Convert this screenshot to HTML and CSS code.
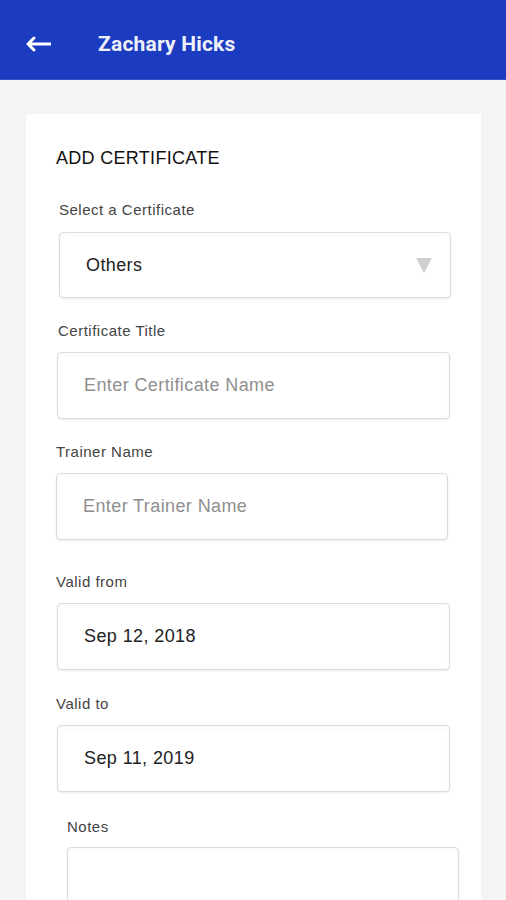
FILE: index.html
```html
<!DOCTYPE html>
<html>
<head>
<meta charset="utf-8">
<link rel="stylesheet" href="styles.css">
</head>
<body>
<header class="appbar">
  <svg class="back" width="26" height="16" viewBox="0 0 26 16"><path d="M25 8H3M9 2L3 8l6 6" fill="none" stroke="#fff" stroke-width="3" stroke-linecap="round" stroke-linejoin="round"/></svg>
  <h1 class="title">Zachary Hicks</h1>
</header>
<main class="page">
  <section class="card">
    <h2 class="card-title">ADD CERTIFICATE</h2>
    <div class="field f-select">
      <label class="label">Select a Certificate</label>
      <div class="box">
        <span class="value">Others</span>
        <span class="caret"></span>
      </div>
    </div>
    <div class="field f-title">
      <label class="label">Certificate Title</label>
      <div class="box"><span class="placeholder">Enter Certificate Name</span></div>
    </div>
    <div class="field f-trainer">
      <label class="label">Trainer Name</label>
      <div class="box"><span class="placeholder">Enter Trainer Name</span></div>
    </div>
    <div class="field f-from">
      <label class="label">Valid from</label>
      <div class="box"><span class="value">Sep 12, 2018</span></div>
    </div>
    <div class="field f-to">
      <label class="label">Valid to</label>
      <div class="box"><span class="value">Sep 11, 2019</span></div>
    </div>
    <div class="field f-notes">
      <label class="label">Notes</label>
      <div class="box notes-box"></div>
    </div>
  </section>
</main>
</body>
</html>
```
FILE: styles.css
```css
* { box-sizing: border-box; }
html, body { margin: 0; padding: 0; }
body {
  width: 506px;
  height: 900px;
  overflow: hidden;
  background: #f4f4f4;
  font-family: "Liberation Sans", Arial, sans-serif;
}
.appbar {
  height: 80px;
  background: #1b3bc0;
  border-bottom: 1px solid #3a50c8;
  display: flex;
  align-items: center;
  padding-left: 25px;
  padding-top: 8px;
}
.back { display: block; }
.title {
  margin: 0 0 0 47px;
  font-family: Roboto, "Liberation Sans", sans-serif;
  font-weight: 700;
  font-size: 21px;
  color: #eef0fb;
  letter-spacing: 0.2px;
}
.page {
  padding: 34px 25px 0 26px;
  height: 820px;
  overflow: hidden;
}
.card {
  background: #fff;
  padding: 34px 0 0 0;
  height: 786px;
  overflow: hidden;
}
.card-title {
  margin: 0 0 32px 30px;
  font-size: 18px;
  line-height: 20px;
  font-weight: 400;
  color: #111;
  letter-spacing: 0.3px;
}
.field {
  display: flex;
  flex-direction: column;
  margin-bottom: 23px;
}
.label {
  font-size: 15px;
  line-height: 20px;
  color: #444;
  letter-spacing: 0.5px;
  margin-bottom: 12px;
}
.box {
  height: 66px;
  flex-shrink: 0;
  border: 1px solid #dcdcdc;
  border-radius: 4px;
  box-shadow: 0 1px 2px rgba(0,0,0,0.08), inset 0 2px 4px rgba(0,0,0,0.03);
  display: flex;
  align-items: center;
  padding-left: 26px;
  padding-right: 18px;
  background: #fff;
}
.value { font-size: 18px; color: #222; letter-spacing: 0.4px; }
.placeholder { font-size: 18px; color: #8f8f8f; letter-spacing: 0.4px; }
.caret {
  margin-left: auto;
  width: 0; height: 0;
  border-left: 8px solid transparent;
  border-right: 8px solid transparent;
  border-top: 15px solid #cfcfcf;
}
.f-select { margin-left: 33px; margin-right: 30px; }
.f-title { margin-left: 31px; margin-right: 31px; }
.f-title .label { margin-left: 1px; margin-bottom: 11px; }
.f-title .box { height: 67px; }
.f-trainer { margin-left: 30px; margin-right: 33px; margin-bottom: 32px; }
.f-trainer .label { margin-bottom: 11px; }
.f-trainer .box { height: 67px; }
.f-from { margin-left: 31px; margin-right: 31px; margin-bottom: 24px; }
.f-from .label { margin-left: -1px; margin-bottom: 11px; }
.f-from .box { height: 67px; }
.f-to { margin-left: 31px; margin-right: 31px; margin-bottom: 25px; }
.f-to .label { margin-left: -1px; margin-bottom: 11px; }
.f-to .box { height: 67px; }
.f-notes { margin-left: 41px; margin-right: 22px; margin-bottom: 0; }
.f-notes .label { margin-left: 0; margin-bottom: 10px; }
.notes-box { height: 120px; }
```
